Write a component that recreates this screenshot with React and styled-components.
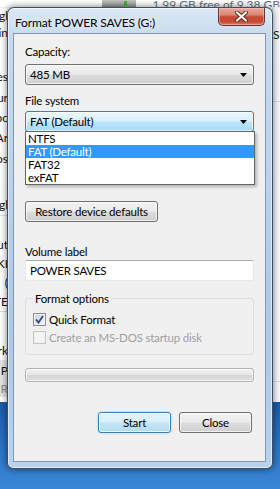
import React from "react";
import styled, { createGlobalStyle } from "styled-components";

const GlobalStyle = createGlobalStyle`
  html, body {
    margin: 0;
    padding: 0;
    background: #2a6bb8;
  }
  * {
    box-sizing: border-box;
  }
`;

const uiFont = `Lato, "Open Sans", "Noto Sans", sans-serif`;

// Desktop / explorer behind the dialog
const Desktop = styled.div`
  position: relative;
  width: 280px;
  height: 489px;
  overflow: hidden;
  display: flex;
  flex-direction: column;
  font-family: ${uiFont};
  font-size: 12px;
`;

const ExplorerTop = styled.div`
  height: 8px;
  background: #ffffff;
  display: flex;
  align-items: flex-end;
  overflow: hidden;
  border-bottom: 1px solid #e8eef5;
`;

const DriveIcon = styled.div`
  width: 34px;
  height: 10px;
  margin-left: 102px;
  margin-bottom: -2px;
  border-radius: 0 0 3px 3px;
  background: linear-gradient(#c8c8c8, #8c8c8c);
`;

const DriveLed = styled.span`
  display: block;
  width: 3px;
  height: 5px;
  margin-left: 22px;
  margin-top: 2px;
  background: #3cbb2e;
`;

const FreeText = styled.span`
  margin-left: 17px;
  margin-bottom: -5px;
  color: #6a7282;
  font-size: 12px;
  white-space: nowrap;
`;

const ExplorerBody = styled.div`
  height: 394px;
  display: flex;
  justify-content: space-between;
  background: #ffffff;
`;

const SidePane = styled.div`
  width: 8px;
  overflow: hidden;
  display: flex;
  flex-direction: column;
  background: ${(p) => p.$bg || "#ffffff"};
  border-left: ${(p) => (p.$right ? "1px solid #d5d9de" : "none")};
`;

const SideRow = styled.div`
  height: ${(p) => p.$h || 20}px;
  flex-shrink: 0;
  display: flex;
  justify-content: ${(p) => (p.$right ? "flex-start" : "flex-end")};
  align-items: center;
  white-space: nowrap;
  color: ${(p) => (p.$muted ? "#8a8a8a" : "#111")};
  font-size: 12px;
  border-bottom: ${(p) => (p.$line ? "1px solid #d9dde2" : "none")};
  background: ${(p) => (p.$grey ? "#e4e4e4" : "transparent")};
`;

const Taskbar = styled.div`
  flex: 1;
  background: linear-gradient(180deg, #1c5aa6 0%, #2b74c6 50%, #3a86d6 100%);
`;

// Dialog window
const WindowFrame = styled.div`
  position: absolute;
  left: 7px;
  top: 7px;
  width: 266px;
  height: 462px;
  border: 1px solid rgba(38, 56, 82, 0.85);
  border-radius: 7px 7px 6px 6px;
  background: linear-gradient(
    180deg,
    #dbe8f5 0%,
    #c7dbee 6%,
    #bdd4ec 30%,
    #adc9e6 70%,
    #bad2eb 100%
  );
  box-shadow: 0 0 7px rgba(0, 0, 0, 0.55),
    inset 0 0 0 1px rgba(255, 255, 255, 0.55);
  display: flex;
  flex-direction: column;
  padding: 0 6px 6px 5px;
`;

const TitleBar = styled.div`
  height: 25px;
  display: flex;
  align-items: flex-start;
  flex-shrink: 0;
`;

const TitleText = styled.span`
  padding-left: 2px;
  margin-top: 7px;
  color: #000;
  font-size: 12px;
  letter-spacing: -0.15px;
  text-shadow: 0 0 6px rgba(255, 255, 255, 0.95);
  white-space: nowrap;
`;

const CloseButton = styled.div`
  margin-left: auto;
  margin-right: 1px;
  width: 47px;
  height: 18px;
  border: 1px solid #6e3027;
  border-top: none;
  border-radius: 0 0 5px 5px;
  background: linear-gradient(
    180deg,
    #e9a99c 0%,
    #dc8574 40%,
    #c84a34 52%,
    #c64a33 80%,
    #d8806a 100%
  );
  box-shadow: inset 0 0 0 1px rgba(255, 210, 200, 0.45);
  display: flex;
  align-items: center;
  justify-content: center;
`;

const ClientArea = styled.div`
  flex: 1;
  background: #f0f0f0;
  border: 1px solid #8296ad;
  padding: 10px 11px 0 11px;
  display: flex;
  flex-direction: column;
  color: #000;
  font-size: 11.5px;
  letter-spacing: -0.2px;
`;

const FieldLabel = styled.div`
  height: 15px;
  line-height: 15px;
  margin-top: ${(p) => p.$mt || 0}px;
  white-space: nowrap;
`;

const ComboWrap = styled.div`
  position: relative;
  margin-top: ${(p) => p.$mt || 0}px;
  z-index: ${(p) => (p.$open ? 5 : 1)};
`;

const Combo = styled.div`
  height: 21px;
  border: 1px solid ${(p) => (p.$focused ? "#3c7fb1" : "#707070")};
  border-radius: 3px;
  background: ${(p) =>
    p.$focused
      ? "linear-gradient(180deg, #eaf6fd 0%, #d9f0fc 48%, #bee6fd 52%, #a7d9f5 100%)"
      : "linear-gradient(180deg, #f2f2f2 0%, #ebebeb 48%, #dddddd 52%, #cfcfcf 100%)"};
  box-shadow: inset 0 0 0 1px rgba(255, 255, 255, 0.7);
  display: flex;
  align-items: center;
  padding: 0 6px 0 4px;
`;

const ComboText = styled.span`
  flex: 1;
  white-space: nowrap;
`;

const DropList = styled.ul`
  position: absolute;
  left: 0;
  right: -1px;
  top: 20px;
  margin: 0;
  padding: 0;
  list-style: none;
  background: #ffffff;
  border: 1px solid #646464;
  box-shadow: 2px 2px 3px rgba(0, 0, 0, 0.25);
`;

const DropItem = styled.li`
  height: 13px;
  line-height: 13px;
  padding-left: 2px;
  background: ${(p) => (p.$selected ? "#3399ff" : "transparent")};
  color: ${(p) => (p.$selected ? "#ffffff" : "#000")};
  white-space: nowrap;
`;

const ListSpacer = styled.div`
  height: 69px;
  flex-shrink: 0;
`;

const PushButton = styled.div`
  height: 21px;
  width: ${(p) => p.$w || 73}px;
  border: 1px solid ${(p) => (p.$default ? "#3c7fb1" : "#707070")};
  border-radius: 3px;
  background: ${(p) =>
    p.$default
      ? "linear-gradient(180deg, #e5f4fc 0%, #d9eef9 48%, #c4e5f6 52%, #b2dcf2 100%)"
      : "linear-gradient(180deg, #f2f2f2 0%, #ebebeb 48%, #dddddd 52%, #cfcfcf 100%)"};
  box-shadow: ${(p) =>
    p.$default
      ? "inset 0 0 0 1px rgba(255,255,255,0.75), 0 0 2px rgba(70,160,220,0.6)"
      : "inset 0 0 0 1px rgba(255,255,255,0.7)"};
  display: flex;
  align-items: center;
  justify-content: center;
  margin-top: ${(p) => p.$mt || 0}px;
  white-space: nowrap;
`;

const TextInput = styled.div`
  height: 21px;
  margin-top: 1px;
  background: #ffffff;
  border: 1px solid #e3e9ef;
  border-top-color: #abadb3;
  border-radius: 2px;
  display: flex;
  align-items: center;
  padding-left: 4px;
`;

const GroupBox = styled.fieldset`
  margin: 10px 0 0 0;
  padding: 6px 7px 9px 7px;
  border: 1px solid #d5dfe5;
  border-radius: 3px;
  display: flex;
  flex-direction: column;
  gap: 3px;
`;

const GroupLegend = styled.legend`
  padding: 0 2px;
  margin-left: 0;
  line-height: 15px;
`;

const CheckRow = styled.label`
  display: flex;
  align-items: center;
  gap: 3px;
  height: 15px;
  color: ${(p) => (p.$disabled ? "#a0a0a0" : "#000")};
  white-space: nowrap;
`;

const CheckBox = styled.span`
  width: 13px;
  height: 13px;
  border: 1px solid ${(p) => (p.$disabled ? "#c6c6c6" : "#8e8f8f")};
  background: ${(p) =>
    p.$disabled
      ? "#f4f4f4"
      : "linear-gradient(135deg, #cbcfd5 0%, #f6f6f6 100%)"};
  box-shadow: inset 0 0 0 1px ${(p) => (p.$disabled ? "#f0f0f0" : "#f4f4f4")};
  display: flex;
  align-items: center;
  justify-content: center;
  flex-shrink: 0;
`;

const ProgressBar = styled.div`
  margin-top: 13px;
  height: 14px;
  border: 1px solid #b2b2b2;
  border-radius: 3px;
  background: linear-gradient(
    180deg,
    #f3f3f3 0%,
    #e6e6e6 45%,
    #d4d4d4 55%,
    #e2e2e2 100%
  );
  box-shadow: inset 0 0 0 1px rgba(255, 255, 255, 0.6);
`;

const ButtonRow = styled.div`
  display: flex;
  justify-content: flex-end;
  gap: 8px;
  margin-top: 30px;
  padding-right: 2px;
`;

const ArrowDown = () => (
  <svg width="7" height="4" viewBox="0 0 7 4">
    <polygon points="0,0 7,0 3.5,4" fill="#000" />
  </svg>
);

const CloseGlyph = () => (
  <svg width="13" height="11" viewBox="0 0 13 11">
    <path
      d="M2 1.5 L11 9.5 M11 1.5 L2 9.5"
      stroke="#5a2a22"
      strokeWidth="4"
      strokeLinecap="round"
    />
    <path
      d="M2 1.5 L11 9.5 M11 1.5 L2 9.5"
      stroke="#ffffff"
      strokeWidth="2.2"
      strokeLinecap="round"
    />
  </svg>
);

const CheckMark = () => (
  <svg width="9" height="9" viewBox="0 0 9 9">
    <path
      d="M1 4.5 L3.5 7.5 L8 1"
      stroke="#2f4a8c"
      strokeWidth="1.8"
      fill="none"
    />
  </svg>
);

const leftRows = [
  { t: "Googl", h: 14 },
  { t: "Domain", h: 20 },
  { t: "", h: 24 },
  { t: "Types", h: 21 },
  { t: "Your", h: 20 },
  { t: "Abc", h: 20 },
  { t: "Ar", h: 21 },
  { t: "Videos", h: 21 },
  { t: "", h: 25 },
  { t: "Googl", h: 22, line: true },
  { t: "", h: 18 },
  { t: "About", h: 20 },
  { t: "NIKI", h: 18 },
  { t: "(", h: 20 },
  { t: "NOTE", h: 20, line: true },
  { t: "", h: 28 },
  { t: "Work", h: 20 },
  { t: "P", h: 20, grey: true },
  { t: "R", h: 17, grey: true, muted: true },
];

const rightRows = [
  { t: "", h: 18 },
  { t: "Si", h: 16 },
  { t: "", h: 60, line: true },
  { t: "", h: 40 },
  { t: "", h: 240, line: true },
];

const fileSystems = ["NTFS", "FAT (Default)", "FAT32", "exFAT"];

const FormatDialog = () => (
  <WindowFrame>
    <TitleBar>
      <TitleText>Format POWER SAVES (G:)</TitleText>
      <CloseButton>
        <CloseGlyph />
      </CloseButton>
    </TitleBar>
    <ClientArea>
      <FieldLabel>Capacity:</FieldLabel>
      <ComboWrap $mt={5}>
        <Combo>
          <ComboText>485 MB</ComboText>
          <ArrowDown />
        </Combo>
      </ComboWrap>

      <FieldLabel $mt={8}>File system</FieldLabel>
      <ComboWrap $mt={3} $open>
        <Combo $focused>
          <ComboText>FAT (Default)</ComboText>
          <ArrowDown />
        </Combo>
        <DropList>
          {fileSystems.map((fs) => (
            <DropItem key={fs} $selected={fs === "FAT (Default)"}>
              {fs}
            </DropItem>
          ))}
        </DropList>
      </ComboWrap>

      <ListSpacer />

      <PushButton $w={133}>Restore device defaults</PushButton>

      <FieldLabel $mt={22}>Volume label</FieldLabel>
      <TextInput>POWER SAVES</TextInput>

      <GroupBox>
        <GroupLegend>Format options</GroupLegend>
        <CheckRow>
          <CheckBox>
            <CheckMark />
          </CheckBox>
          Quick Format
        </CheckRow>
        <CheckRow $disabled>
          <CheckBox $disabled />
          Create an MS-DOS startup disk
        </CheckRow>
      </GroupBox>

      <ProgressBar />

      <ButtonRow>
        <PushButton $default>Start</PushButton>
        <PushButton>Close</PushButton>
      </ButtonRow>
    </ClientArea>
  </WindowFrame>
);

const App = () => (
  <>
    <GlobalStyle />
    <Desktop>
      <ExplorerTop>
        <DriveIcon>
          <DriveLed />
        </DriveIcon>
        <FreeText>1.99 GB free of 9.38 GB</FreeText>
      </ExplorerTop>
      <ExplorerBody>
        <SidePane>
          {leftRows.map((r, i) => (
            <SideRow
              key={i}
              $h={r.h}
              $line={r.line}
              $grey={r.grey}
              $muted={r.muted}
            >
              {r.t}
            </SideRow>
          ))}
        </SidePane>
        <SidePane $right $bg="#f7f8fa">
          {rightRows.map((r, i) => (
            <SideRow key={i} $h={r.h} $line={r.line} $right>
              {r.t}
            </SideRow>
          ))}
        </SidePane>
      </ExplorerBody>
      <Taskbar />
      <FormatDialog />
    </Desktop>
  </>
);

export default App;
